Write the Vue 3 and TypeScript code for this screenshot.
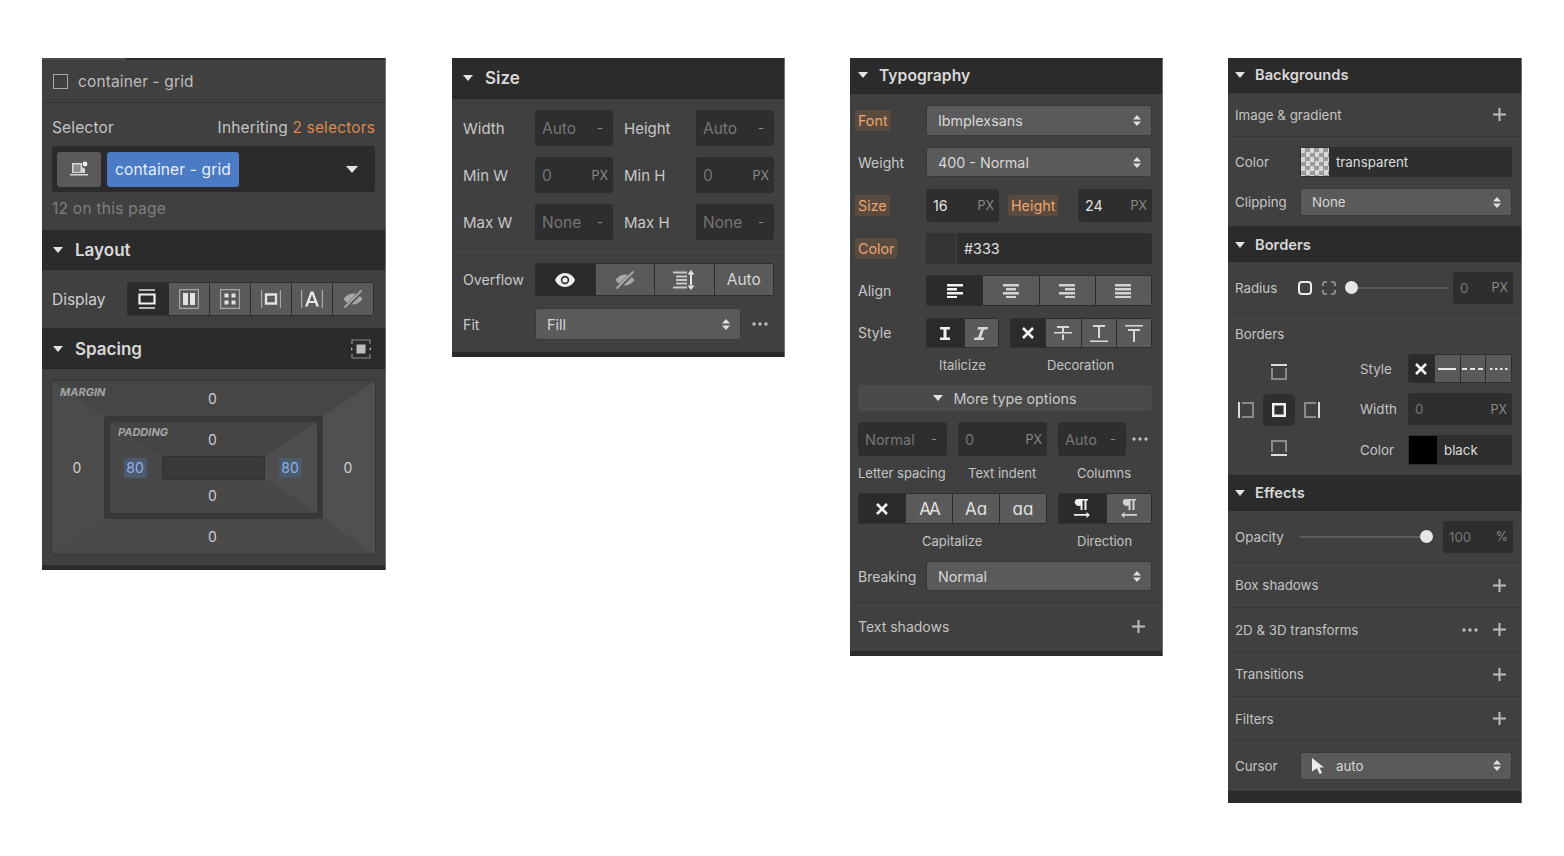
<script setup lang="ts">
const rows: { label: string; dots?: boolean }[] = [
  { label: 'Box shadows' },
  { label: '2D & 3D transforms', dots: true },
  { label: 'Transitions' },
  { label: 'Filters' },
]
const sizes = [
  [{ l: 'Width', v: 'Auto', u: '-' }, { l: 'Height', v: 'Auto', u: '-' }],
  [{ l: 'Min W', v: '0', u: 'PX' }, { l: 'Min H', v: '0', u: 'PX' }],
  [{ l: 'Max W', v: 'None', u: '-' }, { l: 'Max H', v: 'None', u: '-' }],
]
</script>

<template>
  <main class="page">
    <!-- Panel 1 -->
    <section class="panel p1">
      <div class="p1-top">
        <span class="check"></span>
        <span>container - grid</span>
      </div>
      <div class="p1-sel">
        <div class="p1-sel-head">
          <span>Selector</span>
          <span>Inheriting <em>2 selectors</em></span>
        </div>
        <div class="p1-box">
          <span class="p1-dev">
            <svg viewBox="0 0 18 16" width="18" height="16"><path fill="#d8d8d8" d="M2 2h10v2.500a3 3 0 0 0 3 3V12H2zM0 13h18v1.500H0z"/><circle cx="15" cy="3" r="2.400" fill="#eee"/><path fill="#8c8c8c" d="M3.500 3.500h7V11h-7z"/></svg>
          </span>
          <span class="p1-tag">container - grid</span>
          <span class="caret big p1-caret"></span>
        </div>
        <div class="p1-count">12 on this page</div>
      </div>
      <header class="head h40"><span class="caret"></span><b>Layout</b></header>
      <div class="p1-display">
        <span>Display</span>
        <div class="seg seg-display">
          <span class="on">
            <svg viewBox="0 0 20 20" width="20" height="20"><path fill="none" stroke="#f0f0f0" stroke-width="1.400" d="M2 1h16"/><path fill="none" stroke="#f0f0f0" stroke-width="2.200" d="M2.500 5.500h15v9h-15z"/><path fill="none" stroke="#f0f0f0" stroke-width="1.400" d="M2 19h16"/></svg>
          </span>
          <span>
            <svg viewBox="0 0 20 20" width="20" height="20"><path fill="none" stroke="#a8a8a8" stroke-width="1.200" d="M.6.600h18.800v18.800H.6z"/><path fill="#e2e2e2" d="M4 4h5v12H4zM11 4h5v12h-5z"/></svg>
          </span>
          <span>
            <svg viewBox="0 0 20 20" width="20" height="20"><path fill="none" stroke="#a8a8a8" stroke-width="1.200" d="M.6.600h18.800v18.800H.6z"/><path fill="#e2e2e2" d="M4.500 4.500h4v4h-4zM11.500 4.500h4v4h-4zM4.500 11.500h4v4h-4zM11.500 11.500h4v4h-4z"/></svg>
          </span>
          <span>
            <svg viewBox="0 0 20 20" width="20" height="20"><path fill="none" stroke="#a8a8a8" stroke-width="1.200" d="M.6 1v18M19.400 1v18"/><path fill="none" stroke="#e2e2e2" stroke-width="2.400" d="M5 5.500h10v9H5z"/></svg>
          </span>
          <span>
            <svg viewBox="0 0 22 20" width="22" height="20"><path fill="none" stroke="#a8a8a8" stroke-width="1.200" d="M.6 1v18M21.400 1v18"/><path fill="#e6e6e6" d="M9.600 2.500h2.800L18 17.500h-2.700l-1.200-3.400H7.900l-1.200 3.400H4zM8.700 12h4.600L11 5.500z"/></svg>
          </span>
          <span>
            <svg viewBox="0 0 20 20" width="20" height="20"><path fill="#a8a8a8" d="M10 4.500c4.500 0 8 3.300 9.500 5.500-1.500 2.200-5 5.500-9.500 5.500S2 12.200.5 10C2 7.800 5.500 4.500 10 4.500z"/><path stroke="#5a5a5a" stroke-width="4" d="M2 19L18 3"/><path stroke="#a8a8a8" stroke-width="1.800" d="M1.500 18.500l17-17"/></svg>
          </span>
        </div>
      </div>
      <header class="head h41 spacing-head">
        <span class="caret"></span><b>Spacing</b>
        <svg class="spacing-ico" viewBox="0 0 20 20" width="20" height="20"><path fill="none" stroke="#8c8c8c" stroke-width="1.200" d="M1 5V1h18v4M1 15v4h18v-4"/><path fill="#bdbdbd" d="M5.500 5.500h9v9h-9zM0 8.500l2 1.500-2 1.500zM20 8.500L18 10l2 1.500z"/></svg>
      </header>
      <div class="margin-wrap">
        <div class="box margin-box">
          <svg class="bevel" viewBox="0 0 323 173" preserveAspectRatio="none">
            <polygon points="0,0 323,0 271,35 52,35" fill="#464646"/>
            <polygon points="0,0 52,35 52,138 0,173" fill="#4b4b4b"/>
            <polygon points="323,0 323,173 271,138 271,35" fill="#505050"/>
            <polygon points="0,173 52,138 271,138 323,173" fill="#4a4a4a"/>
          </svg>
          <i class="box-label">MARGIN</i>
          <span class="v top">0</span>
          <span class="v left">0</span>
          <div class="padding-outer">
            <div class="box padding-box">
              <svg class="bevel" viewBox="0 0 207 90" preserveAspectRatio="none">
                <polygon points="0,0 207,0 155,34 52,34" fill="#444"/>
                <polygon points="0,0 52,34 52,57 0,90" fill="#484848"/>
                <polygon points="207,0 207,90 155,57 155,34" fill="#4e4e4e"/>
                <polygon points="0,90 52,57 155,57 207,90" fill="#484848"/>
              </svg>
              <i class="box-label pad">PADDING</i>
              <span class="v top">0</span>
              <span class="v left"><span class="chip">80</span></span>
              <span class="center-slot"></span>
              <span class="v right"><span class="chip">80</span></span>
              <span class="v bottom">0</span>
            </div>
          </div>
          <span class="v right">0</span>
          <span class="v bottom">0</span>
        </div>
      </div>
      <div class="bar foot5"></div>
    </section>

    <!-- Panel 2 -->
    <section class="panel p2">
      <header class="head h41"><span class="caret"></span><b>Size</b></header>
      <div class="p2-fields">
        <div v-for="(row, i) in sizes" :key="i" class="p2-row">
          <template v-for="c in row" :key="c.l">
            <span class="p2-label">{{ c.l }}</span>
            <span class="inp p2-inp"><span>{{ c.v }}</span><small :class="{ dash: c.u === '-' }">{{ c.u }}</small></span>
          </template>
        </div>
      </div>
      <div class="p2-over">
        <div class="p2-line">
          <span class="p2-label wide">Overflow</span>
          <div class="seg seg-over">
            <span class="on">
              <svg viewBox="0 0 20 14" width="20" height="14"><path fill="#f0f0f0" d="M10 0c4.500 0 8.300 3 10 7-1.700 4-5.500 7-10 7S1.700 11 0 7c1.700-4 5.500-7 10-7z"/><circle cx="10" cy="7" r="4.200" fill="#2b2b2b"/><circle cx="10" cy="7" r="2.600" fill="#f0f0f0"/></svg>
            </span>
            <span>
              <svg viewBox="0 0 20 20" width="20" height="20"><path fill="#a8a8a8" d="M10 4.500c4.500 0 8 3.300 9.500 5.500-1.500 2.200-5 5.500-9.500 5.500S2 12.200.5 10C2 7.800 5.500 4.500 10 4.500z"/><path stroke="#5a5a5a" stroke-width="4" d="M2 19L18 3"/><path stroke="#a8a8a8" stroke-width="1.800" d="M1.500 18.500l17-17"/></svg>
            </span>
            <span>
              <svg viewBox="0 0 22 20" width="22" height="20"><path fill="#c8c8c8" d="M0 1.500h14v2H0zM3 5.500h11v2H3zM3 9h11v2H3zM3 12.500h11v2H3zM0 16.500h14v2H0z"/><path fill="#e6e6e6" d="M17 4h2v12h-2zM18 0l3.500 4.500h-7zM18 20l3.500-4.500h-7z"/></svg>
            </span>
            <span class="txt">Auto</span>
          </div>
        </div>
        <div class="p2-line fit">
          <span class="p2-label wide">Fit</span>
          <span class="sel fit-sel">Fill<svg class="ud" viewBox="0 0 8 11"><path d="M4 0l4 4.500H0zM4 11l4-4.500H0z"/></svg></span>
          <svg class="dots" viewBox="0 0 16 4" width="16" height="4"><circle cx="2" cy="2" r="1.700"/><circle cx="8" cy="2" r="1.700"/><circle cx="14" cy="2" r="1.700"/></svg>
        </div>
      </div>
      <div class="bar foot5"></div>
    </section>

    <!-- Panel 3 -->
    <section class="panel p3">
      <header class="head h36 t"><span class="caret"></span><b>Typography</b></header>
      <div class="p3-body">
        <div class="p3-row r1">
          <span class="lab"><span class="flag">Font</span></span>
          <span class="sel grow">Ibmplexsans<svg class="ud" viewBox="0 0 8 11"><path d="M4 0l4 4.500H0zM4 11l4-4.500H0z"/></svg></span>
        </div>
        <div class="p3-row r2">
          <span class="lab">Weight</span>
          <span class="sel grow">400 - Normal<svg class="ud" viewBox="0 0 8 11"><path d="M4 0l4 4.500H0zM4 11l4-4.500H0z"/></svg></span>
        </div>
        <div class="p3-row r3">
          <span class="lab"><span class="flag">Size</span></span>
          <span class="inp strong w73"><span>16</span><small>PX</small></span>
          <span class="flag h-flag">Height</span>
          <span class="inp strong w74"><span>24</span><small>PX</small></span>
        </div>
        <div class="p3-row r4">
          <span class="lab"><span class="flag">Color</span></span>
          <span class="inp strong color grow"><span class="swatch dark"></span><span>#333</span></span>
        </div>
        <div class="p3-row r5">
          <span class="lab">Align</span>
          <div class="seg seg-align grow">
            <span class="on"><svg viewBox="0 0 16 14" width="16" height="14"><path fill="#f0f0f0" d="M0 0h16v2.500H0zM0 4h10v2.500H0zM0 8h16v2.500H0zM0 12h10v2H0z"/></svg></span>
            <span><svg viewBox="0 0 16 14" width="16" height="14"><path fill="#d2d2d2" d="M0 0h16v2.500H0zM3 4h10v2.500H3zM0 8h16v2.500H0zM3 12h10v2H3z"/></svg></span>
            <span><svg viewBox="0 0 16 14" width="16" height="14"><path fill="#d2d2d2" d="M0 0h16v2.500H0zM6 4h10v2.500H6zM0 8h16v2.500H0zM6 12h10v2H6z"/></svg></span>
            <span><svg viewBox="0 0 16 14" width="16" height="14"><path fill="#d2d2d2" d="M0 0h16v2.500H0zM0 4h16v2.500H0zM0 8h16v2.500H0zM0 12h16v2H0z"/></svg></span>
          </div>
        </div>
        <div class="p3-row r6">
          <span class="lab style-lab">Style</span>
          <div class="seg seg-ital">
            <span class="on"><svg viewBox="0 0 10 13" width="10" height="13"><path fill="#f0f0f0" d="M0 0h10v2.500H6.500v8H10V13H0v-2.500h3.500v-8H0z"/></svg></span>
            <span><svg viewBox="0 0 14 13" width="14" height="13"><path fill="#d8d8d8" d="M4 0h10l-.5 2.500H10L7 10.500h3L9.500 13H0l.5-2.500H4L7 2.500H3.500z"/></svg></span>
          </div>
          <div class="seg seg-deco">
            <span class="on"><svg viewBox="0 0 12 12" width="12" height="12"><path stroke="#f5f5f5" stroke-width="2.600" d="M1 1l10 10M11 1L1 11"/></svg></span>
            <span><svg viewBox="0 0 18 14" width="18" height="14"><path fill="#d8d8d8" d="M3 0h12v2H10v4H8V2H3zM0 6h18v1.500H0zM8 8.500h2V14H8z"/></svg></span>
            <span><svg viewBox="0 0 18 17" width="18" height="17"><path fill="#d8d8d8" d="M3 0h12v2h-5v11H8V2H3zM0 15.500h18V17H0z"/></svg></span>
            <span><svg viewBox="0 0 18 17" width="18" height="17"><path fill="#d8d8d8" d="M0 0h18v1.500H0zM3 4h12v2h-5v11H8V6H3z"/></svg></span>
          </div>
        </div>
        <div class="p3-cap c1"><span class="cap-ital">Italicize</span><span class="cap-deco">Decoration</span></div>
        <div class="more"><span class="caret"></span>More type options</div>
        <div class="p3-row r7">
          <span class="inp w89"><span>Normal</span><small class="dash">-</small></span>
          <span class="inp w89"><span>0</span><small>PX</small></span>
          <span class="inp w68"><span>Auto</span><small class="dash">-</small></span>
          <svg class="dots d3" viewBox="0 0 16 4" width="16" height="4"><circle cx="2" cy="2" r="1.700"/><circle cx="8" cy="2" r="1.700"/><circle cx="14" cy="2" r="1.700"/></svg>
        </div>
        <div class="p3-cap c2"><span class="cap-ls">Letter spacing</span><span class="cap-ti">Text indent</span><span class="cap-co">Columns</span></div>
        <div class="p3-row r8">
          <div class="seg seg-caps">
            <span class="on"><svg viewBox="0 0 12 12" width="12" height="12"><path stroke="#f5f5f5" stroke-width="2.600" d="M1 1l10 10M11 1L1 11"/></svg></span>
            <span class="tx tight">AA</span>
            <span class="tx">Aa</span>
            <span class="tx">aa</span>
          </div>
          <div class="seg seg-dir">
            <span class="on"><svg viewBox="0 0 16 20" width="16" height="20"><path fill="#f0f0f0" d="M3 0h11v1.500h-1.500V11h-2V1.500H8.500V11h-2V6.500A3.500 3.300 0 0 1 3 0z"/><path fill="#f0f0f0" d="M0 15h12.500v-2l3.500 3-3.500 3v-2.200H0z"/></svg></span>
            <span><svg viewBox="0 0 16 20" width="16" height="20"><path fill="#d2d2d2" d="M4 0h11v1.500h-1.500V11h-2V1.500H9.500V11h-2V6.500A3.500 3.300 0 0 1 4 0z"/><path fill="#d2d2d2" d="M16 15H3.500v-2L0 16l3.500 3v-2.200H16z"/></svg></span>
          </div>
        </div>
        <div class="p3-cap c3"><span class="cap-cap">Capitalize</span><span class="cap-dir">Direction</span></div>
        <div class="p3-row r9">
          <span class="lab">Breaking</span>
          <span class="sel grow">Normal<svg class="ud" viewBox="0 0 8 11"><path d="M4 0l4 4.500H0zM4 11l4-4.500H0z"/></svg></span>
        </div>
      </div>
      <div class="p3-shadow">
        <span>Text shadows</span>
        <svg class="plus" viewBox="0 0 13 13" width="13" height="13"><path d="M5.500 0h2v5.500H13v2H7.500V13h-2V7.500H0v-2h5.500z"/></svg>
      </div>
      <div class="bar foot5"></div>
    </section>

    <!-- Panel 4 -->
    <section class="panel p4">
      <header class="head h35 s"><span class="caret"></span><b>Backgrounds</b></header>
      <div class="p4-line l44">
        <span>Image &amp; gradient</span>
        <svg class="plus" viewBox="0 0 13 13" width="13" height="13"><path d="M5.500 0h2v5.500H13v2H7.500V13h-2V7.500H0v-2h5.500z"/></svg>
      </div>
      <div class="p4-bg">
        <div class="p4-row c"><span class="lab4">Color</span><span class="inp strong color p4-w"><span class="swatch checker"></span><span>transparent</span></span></div>
        <div class="p4-row k"><span class="lab4">Clipping</span><span class="sel p4-w">None<svg class="ud" viewBox="0 0 8 11"><path d="M4 0l4 4.500H0zM4 11l4-4.500H0z"/></svg></span></div>
      </div>
      <header class="head h36 s nudge"><span class="caret"></span><b>Borders</b></header>
      <div class="p4-radius">
        <span class="lab4 rad">Radius</span>
        <svg class="rad-1" viewBox="0 0 14 14" width="14" height="14"><rect x="1" y="1" width="12" height="12" rx="3" fill="none" stroke="#ececec" stroke-width="2"/></svg>
        <svg class="rad-2" viewBox="0 0 14 14" width="14" height="14"><path fill="none" stroke="#8a8a8a" stroke-width="2" d="M1 5V3a2 2 0 0 1 2-2h2M9 1h2a2 2 0 0 1 2 2v2M13 9v2a2 2 0 0 1-2 2H9M5 13H3a2 2 0 0 1-2-2V9"/></svg>
        <span class="slider s1"><span class="knob"></span></span>
        <span class="inp i60"><span>0</span><small>PX</small></span>
      </div>
      <div class="p4-borders">
        <div class="p4-b-title">Borders</div>
        <div class="p4-b-grid">
          <div class="sides">
            <svg class="side st" viewBox="0 0 16 16" width="16" height="16"><path fill="none" stroke="#8a8a8a" stroke-width="2" d="M1 4v11h14V4"/><path fill="#dcdcdc" d="M0 0h16v2H0z"/></svg>
            <svg class="side sl" viewBox="0 0 16 16" width="16" height="16"><path fill="none" stroke="#8a8a8a" stroke-width="2" d="M4 1h11v14H4"/><path fill="#dcdcdc" d="M0 0h2v16H0z"/></svg>
            <span class="side-on"><svg viewBox="0 0 14 14" width="14" height="14"><path fill="none" stroke="#f0f0f0" stroke-width="2.400" d="M1.200 1.200h11.600v11.600H1.200z"/></svg></span>
            <svg class="side sr" viewBox="0 0 16 16" width="16" height="16"><path fill="none" stroke="#8a8a8a" stroke-width="2" d="M12 1H1v14h11"/><path fill="#dcdcdc" d="M14 0h2v16h-2z"/></svg>
            <svg class="side sb" viewBox="0 0 16 16" width="16" height="16"><path fill="none" stroke="#8a8a8a" stroke-width="2" d="M1 12V1h14v11"/><path fill="#dcdcdc" d="M0 14h16v2H0z"/></svg>
          </div>
          <div class="b-fields">
            <div class="b-row st1">
              <span class="lab4 bl">Style</span>
              <div class="seg seg-bstyle">
                <span class="on"><svg viewBox="0 0 12 12" width="12" height="12"><path stroke="#f5f5f5" stroke-width="2.600" d="M1 1l10 10M11 1L1 11"/></svg></span>
                <span><svg viewBox="0 0 18 2" width="18" height="2"><path fill="#e6e6e6" d="M0 0h18v2H0z"/></svg></span>
                <span><svg viewBox="0 0 21 2" width="21" height="2"><path fill="#e6e6e6" d="M0 0h5v2H0zM8 0h5v2H8zM16 0h5v2h-5z"/></svg></span>
                <span><svg viewBox="0 0 18 2" width="18" height="2"><path fill="#e6e6e6" d="M0 0h2.500v2H0zM5 0h2.500v2H5zM10 0h2.500v2H10zM15 0h2.500v2H15z"/></svg></span>
              </div>
            </div>
            <div class="b-row st2">
              <span class="lab4 bl">Width</span>
              <span class="inp i104"><span>0</span><small>PX</small></span>
            </div>
            <div class="b-row st3">
              <span class="lab4 bl">Color</span>
              <span class="inp strong color i104"><span class="swatch black"></span><span>black</span></span>
            </div>
          </div>
        </div>
      </div>
      <header class="head h36 s"><span class="caret"></span><b>Effects</b></header>
      <div class="p4-radius op">
        <span class="lab4 opl">Opacity</span>
        <span class="slider s2"><span class="knob"></span></span>
        <span class="inp i70"><span>100</span><small>%</small></span>
      </div>
      <div v-for="r in rows" :key="r.label" class="p4-line l445">
        <span>{{ r.label }}</span>
        <svg v-if="r.dots" class="dots d4" viewBox="0 0 16 4" width="16" height="4"><circle cx="2" cy="2" r="1.700"/><circle cx="8" cy="2" r="1.700"/><circle cx="14" cy="2" r="1.700"/></svg>
        <svg class="plus" viewBox="0 0 13 13" width="13" height="13"><path d="M5.500 0h2v5.500H13v2H7.500V13h-2V7.500H0v-2h5.500z"/></svg>
      </div>
      <div class="p4-row cursor">
        <span class="lab4">Cursor</span>
        <span class="sel p4-w cur">
          <svg viewBox="0 0 12 16" width="12" height="16"><path fill="#ececec" d="M0 0l12 9.500H7.500L10 15l-2.500 1-2.500-5.700L0 13.500z"/></svg>
          <span>auto</span>
          <svg class="ud" viewBox="0 0 8 11"><path d="M4 0l4 4.500H0zM4 11l4-4.500H0z"/></svg>
        </span>
      </div>
      <div class="bar foot12"></div>
    </section>
  </main>
</template>

<style>
html, body { margin: 0; background: #fff; }
</style>

<style scoped>
.page {
  width: 1564px;
  height: 856px;
  box-sizing: border-box;
  padding: 58px 0 0 42px;
  display: flex;
  align-items: flex-start;
  background: #fff;
  font-family: Inter, "Liberation Sans", sans-serif;
  color: #cfcfcf;
  overflow: hidden;
}
.panel {
  background: #404040;
  flex: none;
  display: flex;
  flex-direction: column;
  border-right: 1px solid #6e6e6e;
  box-sizing: border-box;
  font-size: 15px;
}
.p1 { width: 344px; height: 512px; }
.p2 { width: 333px; height: 299px; margin-left: 66px; }
.p3 { width: 313px; height: 598px; margin-left: 65px; font-size: 14.300px; }
.p4 { width: 294px; height: 745px; margin-left: 65px; font-size: 13.300px; }
.head {
  background: #2b2b2b;
  display: flex;
  align-items: center;
  box-sizing: border-box;
  padding-left: 11px;
  flex: none;
  border-bottom: 1px solid #262626;
  font-size: 17px;
}
.head b { font-weight: 600; color: #d9d9d9; margin-left: 12px; }
.head.t { padding-left: 8px; padding-bottom: 1px; font-size: 15.700px; }
.head.t b { margin-left: 11px; }
.head.s { padding-left: 7px; font-size: 14.700px; }
.head.s b { margin-left: 10px; }
.head.nudge { padding-top: 2px; }
.spacing-head { padding-top: 2px; }
.h35 { height: 35px; }
.h36 { height: 36px; }
.h40 { height: 40px; }
.h41 { height: 41px; }
.caret {
  width: 0;
  height: 0;
  border-left: 5.500px solid transparent;
  border-right: 5.500px solid transparent;
  border-top: 6px solid #e4e4e4;
  flex: none;
}
.caret.big { border-left-width: 6.500px; border-right-width: 6.500px; border-top-width: 7px; }
.bar { background: #2b2b2b; margin-top: auto; flex: none; }
.foot5 { height: 5px; }
.foot12 { height: 12px; }

.seg {
  display: flex;
  background: #2e2e2e;
  border-radius: 3px;
  box-sizing: border-box;
  padding: 1px;
  gap: 1px;
  flex: none;
}
.seg > span {
  flex: 1 1 0;
  background: #5a5a5a;
  display: flex;
  align-items: center;
  justify-content: center;
}
.seg > span.on { background: #2b2b2b; }
.seg svg { display: block; }

.inp {
  display: flex;
  align-items: center;
  justify-content: space-between;
  box-sizing: border-box;
  background: #2e2e2e;
  border-radius: 3px;
  color: #767676;
  flex: none;
  padding: 0 5px 0 7px;
}
.inp small { font-size: 12.500px; color: #8a8a8a; }
.inp small.dash { margin-right: 5px; font-size: 13px; }
.inp.strong { color: #e0e0e0; }
.inp.color { justify-content: flex-start; padding: 0; }
.swatch { display: block; align-self: stretch; flex: none; border-right: 1px solid #404040; }
.swatch.dark { width: 30px; background: #333; margin-right: 7px; }
.swatch.checker {
  width: 28px;
  margin: 1px 7px 1px 1px;
  background: repeating-conic-gradient(#9a9a9a 0 25%, #d8d8d8 0 50%) 0 0 / 9px 9px;
  border: 0;
}
.swatch.black { width: 28px; background: #000; margin: 1px 7px 1px 1px; border: 0; }

.sel {
  display: flex;
  align-items: center;
  justify-content: space-between;
  box-sizing: border-box;
  background: #5a5a5a;
  border-radius: 3px;
  border: 1px solid #383838;
  color: #d6d6d6;
  flex: none;
  padding: 0 10px 0 11px;
}
.ud { width: 8px; height: 11px; fill: #e0e0e0; flex: none; }
.dots { fill: #bdbdbd; flex: none; }
.plus { fill: #bdbdbd; flex: none; }
.grow { flex: 1 1 auto; }

/* Panel 1 */
.p1-top {
  position: relative;
  height: 45px;
  box-sizing: border-box;
  display: flex;
  align-items: center;
  padding-left: 11px;
  gap: 10px;
  border-bottom: 1px solid #333;
  border-top: 2px solid #4a4a4a;
  font-size: 15.500px;
  letter-spacing: .13px;
  color: #bdbdbd;
  flex: none;
}
.p1-top::before {
  content: "";
  position: absolute;
  left: 84px;
  right: 0;
  top: -2px;
  height: 2px;
  background: #2b2b2b;
}
.check { width: 13px; height: 13px; border: 1.500px solid #a8a8a8; flex: none; }
.p1-sel { height: 127px; padding: 0 10px; box-sizing: border-box; flex: none; }
.p1-sel-head {
  display: flex;
  justify-content: space-between;
  height: 43px;
  padding-top: 6px;
  box-sizing: border-box;
  align-items: center;
  font-size: 15.500px;
  letter-spacing: .15px;
  color: #c4c4c4;
}
.p1-sel-head em { font-style: normal; color: #d9894f; }
.p1-box {
  height: 46px;
  background: #2b2b2b;
  border-radius: 3px;
  display: flex;
  align-items: center;
  padding-left: 5px;
  gap: 6px;
}
.p1-dev {
  width: 44px;
  height: 35px;
  background: #5a5a5a;
  border-radius: 3px;
  display: flex;
  align-items: center;
  justify-content: center;
}
.p1-tag {
  width: 132px;
  height: 35px;
  background: #4a7bc4;
  border-radius: 3px;
  display: flex;
  align-items: center;
  justify-content: center;
  color: #e8eef7;
  font-size: 15.500px;
  letter-spacing: .15px;
}
.p1-caret { margin-left: auto; margin-right: 17px; }
.p1-count { margin-top: 7px; font-size: 15.500px; letter-spacing: .25px; color: #7f7f7f; }
.p1-display {
  height: 58px;
  padding: 0 11px 0 10px;
  display: flex;
  align-items: center;
  justify-content: space-between;
  font-size: 15.500px;
  box-sizing: border-box;
  flex: none;
}
.seg-display { width: 247px; height: 34px; }
.seg-display .on svg { margin-left: -2px; }
.spacing-ico { margin-left: auto; margin-right: 14px; }
.margin-wrap { padding: 12px 10px 0; }
.box { position: relative; display: grid; box-sizing: border-box; }
.margin-box {
  height: 173px;
  grid-template-columns: 52px 219px 52px;
  grid-template-rows: 35px 103px 35px;
  outline: 1px solid #363636;
  border-radius: 1px;
}
.bevel { position: absolute; inset: 0; width: 100%; height: 100%; }
.box-label {
  position: absolute;
  left: 8px;
  top: 4px;
  font-size: 11px;
  font-weight: 700;
  font-style: italic;
  color: #a4a4a4;
}
.box-label.pad { top: 3px; }
.v {
  position: relative;
  display: flex;
  align-items: center;
  justify-content: center;
  padding-right: 2px;
  font-size: 14px;
  color: #cfcfcf;
}
.v.top { grid-column: 2; grid-row: 1; }
.v.left { grid-column: 1; grid-row: 2; }
.v.right { grid-column: 3; grid-row: 2; }
.v.bottom { grid-column: 2; grid-row: 3; }
.padding-outer {
  grid-column: 2;
  grid-row: 2;
  position: relative;
  background: #383838;
  border-radius: 2px;
  padding: 6px;
  box-sizing: border-box;
}
.padding-box {
  grid-template-columns: 52px 103px 52px;
  grid-template-rows: 34px 23px 33px;
  height: 91px;
}
.center-slot {
  grid-column: 2;
  grid-row: 2;
  position: relative;
  background: #3a3a3a;
  border: 1px solid #303030;
  border-radius: 3px;
}
.chip {
  width: 23px;
  height: 20px;
  display: flex;
  align-items: center;
  justify-content: center;
  background: #4c5a6e;
  border-radius: 2px;
  color: #8fb4ea;
}

/* Panel 2 */
.p2-fields { padding-top: 11px; border-bottom: 1px solid #4a4a4a; height: 153px; box-sizing: border-box; flex: none; }
.p2-row { display: flex; align-items: center; height: 36px; margin-bottom: 11px; padding-left: 11px; }
.p2-label { width: 72px; flex: none; color: #c8c8c8; font-size: 15px; }
.p2-label.wide { font-size: 14.200px; }
.p2-inp { width: 78px; height: 36px; margin-right: 11px; font-size: 15.500px; }
.p2-over { flex: none; padding: 11px 0 0 11px; }
.p2-line { display: flex; align-items: center; height: 33px; }
.p2-line.fit { margin-top: 12px; height: 32px; }
.seg-over { width: 239px; height: 33px; }
.seg-over .txt { color: #d6d6d6; font-size: 15.500px; }
.fit-sel { width: 206px; height: 32px; font-size: 14.500px; }
.fit .dots { margin-left: 11px; }

/* Panel 3 */
.p3-body { padding: 11px 10px 0 8px; height: 509px; box-sizing: border-box; border-bottom: 1px solid #363636; flex: none; }
.p3-row { display: flex; align-items: center; }
.lab { width: 68px; flex: none; color: #c8c8c8; font-size: 14px; }
.style-lab { padding-bottom: 2px; }
.flag { background: #5b4a3e; color: #e8a774; border-radius: 2px; padding: 2px 3px; margin-left: -3px; font-size: 14.300px; }
.r1 { height: 31px; }
.r2 { height: 30px; margin-top: 11px; }
.r3 { height: 33px; margin-top: 12px; }
.r4 { height: 31px; margin-top: 11px; }
.r5 { height: 31px; margin-top: 11px; }
.r6 { height: 30px; margin-top: 12px; }
.p3-row > .sel, .p3-row > .inp.grow, .p3-row > .seg.grow { height: 100%; }
.w73 { width: 73px; height: 33px; }
.w74 { width: 74px; height: 33px; margin-left: auto; }
.h-flag { margin: 0 0 0 9px; padding: 2px 3px; }
.seg-ital { width: 73px; height: 30px; }
.seg-ital .on { flex: 1.100 1 0; }
.seg-deco { width: 142px; height: 30px; margin-left: 11px; }
.p3-cap { display: flex; font-size: 13px; color: #c4c4c4; align-items: center; height: 17px; }
.c1 { margin-top: 8px; }
.cap-ital { margin-left: 81px; width: 108px; }
.more {
  margin-top: 12px;
  height: 26px;
  background: #4a4a4a;
  border-radius: 3px;
  display: flex;
  align-items: center;
  justify-content: center;
  gap: 10px;
  color: #c8c8c8;
}
.r7 { height: 34px; margin-top: 11px; font-size: 14.500px; }
.r7 .inp { height: 34px; margin-right: 11px; }
.w89 { width: 89px; }
.w68 { width: 68px; }
.r7 .d3 { margin-left: -5px; }
.c2 { margin-top: 8px; }
.cap-ls { width: 110px; }
.cap-ti { width: 109px; }
.r8 { height: 31px; margin-top: 12px; }
.seg-caps { width: 189px; height: 31px; }
.seg-dir { width: 94px; height: 31px; margin-left: 11px; }
.seg-dir .on { flex: 1.050 1 0; }
.tx { color: #e0e0e0; font-size: 17px; font-feature-settings: "cv11" 1; }
.tx.tight { letter-spacing: -2px; }
.c3 { margin-top: 8px; }
.cap-cap { margin-left: 64px; width: 155px; }
.r9 { height: 30px; margin-top: 12px; }
.p3-shadow {
  height: 47px;
  display: flex;
  align-items: center;
  justify-content: space-between;
  padding: 0 17px 0 8px;
  box-sizing: border-box;
  flex: none;
  color: #c4c4c4;
  font-size: 14px;
}

/* Panel 4 */
.p4-line {
  display: flex;
  align-items: center;
  box-sizing: border-box;
  padding: 0 15px 0 7px;
  border-bottom: 1px solid #363636;
  color: #c4c4c4;
  flex: none;
}
.p4-line .plus { margin-left: auto; }
.p4-line .d4 { margin-left: auto; margin-right: 15px; }
.p4-line .d4 + .plus { margin-left: 0; }
.l44 { height: 44px; }
.l445 { height: 44.500px; padding-top: 1px; }
.p4-bg { height: 89px; padding: 10px 0 0; box-sizing: border-box; flex: none; }
.p4-row { display: flex; align-items: center; padding-left: 7px; flex: none; }
.lab4 { color: #c4c4c4; flex: none; }
.p4-row .lab4 { width: 65px; }
.p4-w { width: 212px; }
.p4-row.c { height: 30px; }
.p4-row.k { height: 28px; margin-top: 11px; }
.p4-row.k .sel { height: 28px; }
.p4-row.c .inp { height: 30px; color: #dcdcdc; }
.p4-radius {
  height: 52px;
  display: flex;
  align-items: center;
  padding: 0 8px 0 7px;
  box-sizing: border-box;
  border-bottom: 1px solid #363636;
  flex: none;
}
.rad { width: 63px; }
.rad-1, .rad-2 { flex: none; }
.rad-2 { margin-left: 10px; }
.slider { position: relative; height: 2px; background: #5c5c5c; flex: none; display: block; }
.slider.s1 { width: 97px; margin-left: 15px; margin-right: 5px; }
.slider.s2 { width: 127px; margin-left: 16px; margin-right: 16px; }
.knob {
  position: absolute;
  top: -5.500px;
  width: 13px;
  height: 13px;
  border-radius: 50%;
  background: #e6e6e6;
}
.s1 .knob { left: -6px; }
.s2 .knob { right: -6px; }
.i60 { width: 60px; height: 32px; }
.i70 { width: 70px; height: 32px; padding-left: 6px; }
.opl { width: 49px; }
.op { height: 52px; }
.p4-borders { height: 161px; padding: 11px 8px 0 7px; box-sizing: border-box; flex: none; }
.p4-b-title { color: #c4c4c4; height: 17px; display: flex; align-items: center; }
.p4-b-grid { display: flex; margin-top: 11px; }
.sides {
  width: 87px;
  height: 115px;
  display: grid;
  grid-template-columns: 21px 32px 20px;
  grid-template-rows: 38px 37px 40px;
  column-gap: 7px;
  align-items: center;
  justify-items: center;
  flex: none;
}
.st { grid-column: 2; grid-row: 1; }
.sl { grid-column: 1; grid-row: 2; }
.side-on {
  grid-column: 2;
  grid-row: 2;
  width: 32px;
  height: 32px;
  background: #2e2e2e;
  border-radius: 5px;
  display: flex;
  align-items: center;
  justify-content: center;
}
.sr { grid-column: 3; grid-row: 2; }
.sb { grid-column: 2; grid-row: 3; }
.b-fields { margin-left: 38px; flex: 1; padding-top: 1px; }
.b-row { display: flex; align-items: center; }
.bl { width: 48px; }
.st1 { height: 29px; }
.st2 { height: 32px; margin-top: 10px; }
.st3 { height: 30px; margin-top: 10px; }
.seg-bstyle { width: 104px; height: 29px; }
.i104 { width: 104px; height: 100%; }
.inp.color.i104 { color: #dcdcdc; }
.cursor { height: 49px; }
.cursor .sel { height: 28px; padding-left: 11px; justify-content: flex-start; }
.cur span { margin-left: 12px; }
.cur .ud { margin-left: auto; }
</style>
